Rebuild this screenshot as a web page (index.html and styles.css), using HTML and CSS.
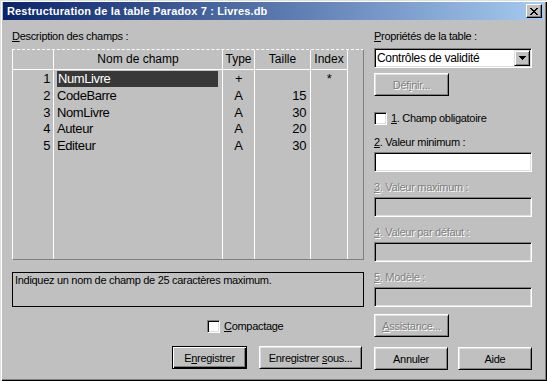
FILE: index.html
```html
<!DOCTYPE html>
<html lang="fr">
<head>
    <meta charset="UTF-8">
    <title>Restructuration de la table Paradox 7 : Livres.db</title>
    <link rel="stylesheet" href="styles.css">
</head>
<body>
    <div class="window">
        <div class="titlebar">
            <span class="title">Restructuration de la table Paradox 7 : Livres.db</span>
            <span class="close-btn">
                <svg width="8" height="7" viewBox="0 0 8 7" shape-rendering="crispEdges">
                    <path d="M0 0h2v1H0z M6 0h2v1H6z M1 1h2v1H1z M5 1h2v1H5z M2 2h4v1H2z M3 3h2v1H3z M2 4h4v1H2z M1 5h2v1H1z M5 5h2v1H5z M0 6h2v1H0z M6 6h2v1H6z" fill="#000"/>
                </svg>
            </span>
        </div>

        <div class="content">
            <!-- Left side: field grid -->
            <div class="left-col">
                <div class="label"><u>D</u>escription des champs :</div>

                <div class="field-grid">
                    <div class="col col-num">
                        <div class="head"></div>
                        <div class="cell">1</div>
                        <div class="cell">2</div>
                        <div class="cell">3</div>
                        <div class="cell">4</div>
                        <div class="cell">5</div>
                    </div>
                    <div class="col col-name">
                        <div class="head">Nom de champ</div>
                        <div class="cell"><span class="selected">NumLivre</span></div>
                        <div class="cell">CodeBarre</div>
                        <div class="cell">NomLivre</div>
                        <div class="cell">Auteur</div>
                        <div class="cell">Editeur</div>
                    </div>
                    <div class="col col-type">
                        <div class="head">Type</div>
                        <div class="cell">+</div>
                        <div class="cell">A</div>
                        <div class="cell">A</div>
                        <div class="cell">A</div>
                        <div class="cell">A</div>
                    </div>
                    <div class="col col-size">
                        <div class="head">Taille</div>
                        <div class="cell"></div>
                        <div class="cell">15</div>
                        <div class="cell">30</div>
                        <div class="cell">20</div>
                        <div class="cell">30</div>
                    </div>
                    <div class="col col-index">
                        <div class="head">Index</div>
                        <div class="cell">*</div>
                    </div>
                    <div class="col col-rest"></div>
                </div>

                <div class="hint">Indiquez un nom de champ de 25 caractères maximum.</div>

                <div class="check-row compact-row">
                    <span class="checkbox"></span>
                    <span><u>C</u>ompactage</span>
                </div>

                <div class="btn-row left-btns">
                    <span class="btn default"><span>E<u>n</u>registrer</span></span>
                    <span class="btn btn-wide"><span>Enregistrer <u>s</u>ous...</span></span>
                </div>
            </div>

            <!-- Right side: table properties -->
            <div class="right-col">
                <div class="label"><u>P</u>ropriétés de la table :</div>
                <div class="select">
                    <span class="select-text">Contrôles de validité</span>
                    <span class="select-arrow">
                        <svg width="7" height="4" viewBox="0 0 7 4" shape-rendering="crispEdges">
                            <path d="M0 0h7v1H0z M1 1h5v1H1z M2 2h3v1H2z M3 3h1v1H3z" fill="#000"/>
                        </svg>
                    </span>
                </div>
                <span class="btn disabled define-btn"><span>Déf<u>i</u>nir...</span></span>

                <div class="check-row required-row">
                    <span class="checkbox"></span>
                    <span><u>1</u>. Champ obligatoire</span>
                </div>

                <div class="field first-field">
                    <div class="label"><u>2</u>. Valeur minimum :</div>
                    <div class="input"></div>
                </div>
                <div class="field">
                    <div class="label disabled"><u>3</u>. Valeur maximum :</div>
                    <div class="input off"></div>
                </div>
                <div class="field">
                    <div class="label disabled"><u>4</u>. Valeur par défaut :</div>
                    <div class="input off"></div>
                </div>
                <div class="field">
                    <div class="label disabled"><u>5</u>. Modèle :</div>
                    <div class="input off"></div>
                </div>

                <span class="btn disabled assist-btn"><span><u>A</u>ssistance...</span></span>

                <div class="btn-row right-btns">
                    <span class="btn"><span>Annuler</span></span>
                    <span class="btn"><span>Aide</span></span>
                </div>
            </div>
        </div>
    </div>
</body>
</html>
```

FILE: styles.css
```css
/* Global */
body {
    margin: 0;
    padding: 0;
    background-color: #c0c0c0;
    font-family: "Liberation Sans", Arial, sans-serif;
    font-size: 11px;
    letter-spacing: -0.3px;
    color: #000;
}

/* Window frame */
.window {
    box-sizing: border-box;
    width: 547px;
    height: 381px;
    padding: 2px 3px;
    background-color: #c0c0c0;
    box-shadow: inset 1px 1px #dfdfdf, inset 2px 2px #fff,
                inset -1px -1px #000, inset -2px -2px #808080;
}

/* Title bar */
.titlebar {
    height: 18px;
    display: flex;
    align-items: center;
    justify-content: space-between;
    padding: 0 2px 0 4px;
    background: linear-gradient(to right, #0a246a, #a6caf0);
}

.title {
    color: #fff;
    font-weight: bold;
    letter-spacing: 0.15px;
}

.close-btn {
    box-sizing: border-box;
    width: 16px;
    height: 14px;
    display: flex;
    align-items: center;
    justify-content: center;
    background: #c0c0c0;
    border: 1px solid;
    border-color: #fff #000 #000 #fff;
    box-shadow: inset -1px -1px #808080;
}

/* Main content */
.content {
    display: flex;
    gap: 10px;
    padding: 10px 0 0 9px;
}

.left-col {
    width: 352px;
    display: flex;
    flex-direction: column;
}

.right-col {
    width: 158px;
    display: flex;
    flex-direction: column;
}

.label {
    height: 13px;
    line-height: 13px;
    white-space: nowrap;
}

.left-col > .label {
    margin-bottom: 6px;
}

.right-col > .label {
    margin-bottom: 5px;
}

.disabled {
    color: #808080;
    text-shadow: 1px 1px #fff;
}

/* Field grid */
.field-grid {
    box-sizing: border-box;
    height: 211px;
    display: flex;
    border-left: 1px solid #fff;
    border-top: 1px dashed #fff;
    border-right: 1px solid #808080;
    border-bottom: 1px solid #808080;
}

.col {
    box-sizing: border-box;
    display: flex;
    flex-direction: column;
    border-right: 1px solid #fff;
}

.col .head {
    height: 19px;
    line-height: 19px;
    border-bottom: 1px solid #fff;
    text-align: center;
    font-size: 12px;
    letter-spacing: 0;
}

.col .cell {
    height: 16.75px;
    line-height: 17px;
    font-size: 13px;
    letter-spacing: -0.4px;
    white-space: nowrap;
}

.col-num { width: 41px; }
.col-num .cell { text-align: right; padding-right: 3px; }

.col-name { width: 169px; }
.col-name .cell { padding-left: 3px; }

.col-name .selected {
    display: block;
    width: 160px;
    height: 16px;
    margin-top: 1px;
    padding-left: 1px;
    line-height: 16px;
    background: #383838;
    color: #fff;
}

.col-type { width: 32px; }
.col-type .cell { text-align: center; }

.col-size { width: 56px; }
.col-size .cell { text-align: right; padding-right: 4px; }

.col-index { width: 37px; }
.col-index .cell { text-align: center; }

.col-rest {
    flex: 1;
    border-right: none;
}

/* Hint box */
.hint {
    box-sizing: border-box;
    height: 35px;
    margin-top: 12px;
    padding: 1px 2px;
    border: 1px solid #000;
    line-height: 13px;
}

/* Checkboxes */
.check-row {
    display: flex;
    align-items: center;
    gap: 4px;
    height: 13px;
    line-height: 13px;
}

.checkbox {
    box-sizing: border-box;
    width: 13px;
    height: 13px;
    background: #fff;
    border: 1px solid;
    border-color: #808080 #fff #fff #808080;
    box-shadow: inset 1px 1px #000, inset -1px -1px #dfdfdf;
}

.compact-row {
    margin-top: 13px;
    padding-left: 195px;
}

.required-row {
    margin-top: 16px;
}

/* Buttons */
.btn {
    box-sizing: border-box;
    width: 75px;
    height: 23px;
    display: flex;
    align-items: center;
    justify-content: center;
    background: #c0c0c0;
    border: 1px solid;
    border-color: #fff #000 #000 #fff;
    box-shadow: inset 1px 1px #dfdfdf, inset -1px -1px #808080;
    white-space: nowrap;
}

.btn.default {
    border-color: #000;
    box-shadow: inset 1px 1px #fff, inset -1px -1px #000, inset -2px -2px #808080;
}

.btn-wide {
    width: 103px;
}

.btn-row {
    display: flex;
}

.left-btns {
    margin-top: 13px;
    justify-content: flex-end;
    gap: 12px;
    padding-right: 2px;
}

.right-btns {
    margin-top: 10px;
    gap: 10px;
}

.define-btn {
    margin-top: 5px;
}

.assist-btn {
    margin-top: 7px;
}

/* Select box */
.select {
    box-sizing: border-box;
    height: 20px;
    display: flex;
    align-items: center;
    justify-content: space-between;
    padding-left: 2px;
    background: #fff;
    border: 1px solid;
    border-color: #808080 #fff #fff #808080;
    box-shadow: inset 1px 1px #000, inset -1px -1px #dfdfdf;
}

.select-text {
    font-size: 12px;
    letter-spacing: -0.3px;
}

.select-arrow {
    box-sizing: border-box;
    width: 16px;
    height: 16px;
    margin-right: 1px;
    display: flex;
    align-items: center;
    justify-content: center;
    background: #c0c0c0;
    border: 1px solid;
    border-color: #dfdfdf #000 #000 #dfdfdf;
    box-shadow: inset 1px 1px #fff, inset -1px -1px #808080;
}

/* Text fields */
.field {
    margin-top: 9px;
}

.field.first-field {
    margin-top: 11px;
}

.field .label {
    margin-bottom: 3px;
}

.input {
    box-sizing: border-box;
    height: 20px;
    background: #fff;
    border: 1px solid;
    border-color: #808080 #fff #fff #808080;
    box-shadow: inset 1px 1px #000, inset -1px -1px #dfdfdf;
}

.input.off {
    background: #c0c0c0;
}
```
